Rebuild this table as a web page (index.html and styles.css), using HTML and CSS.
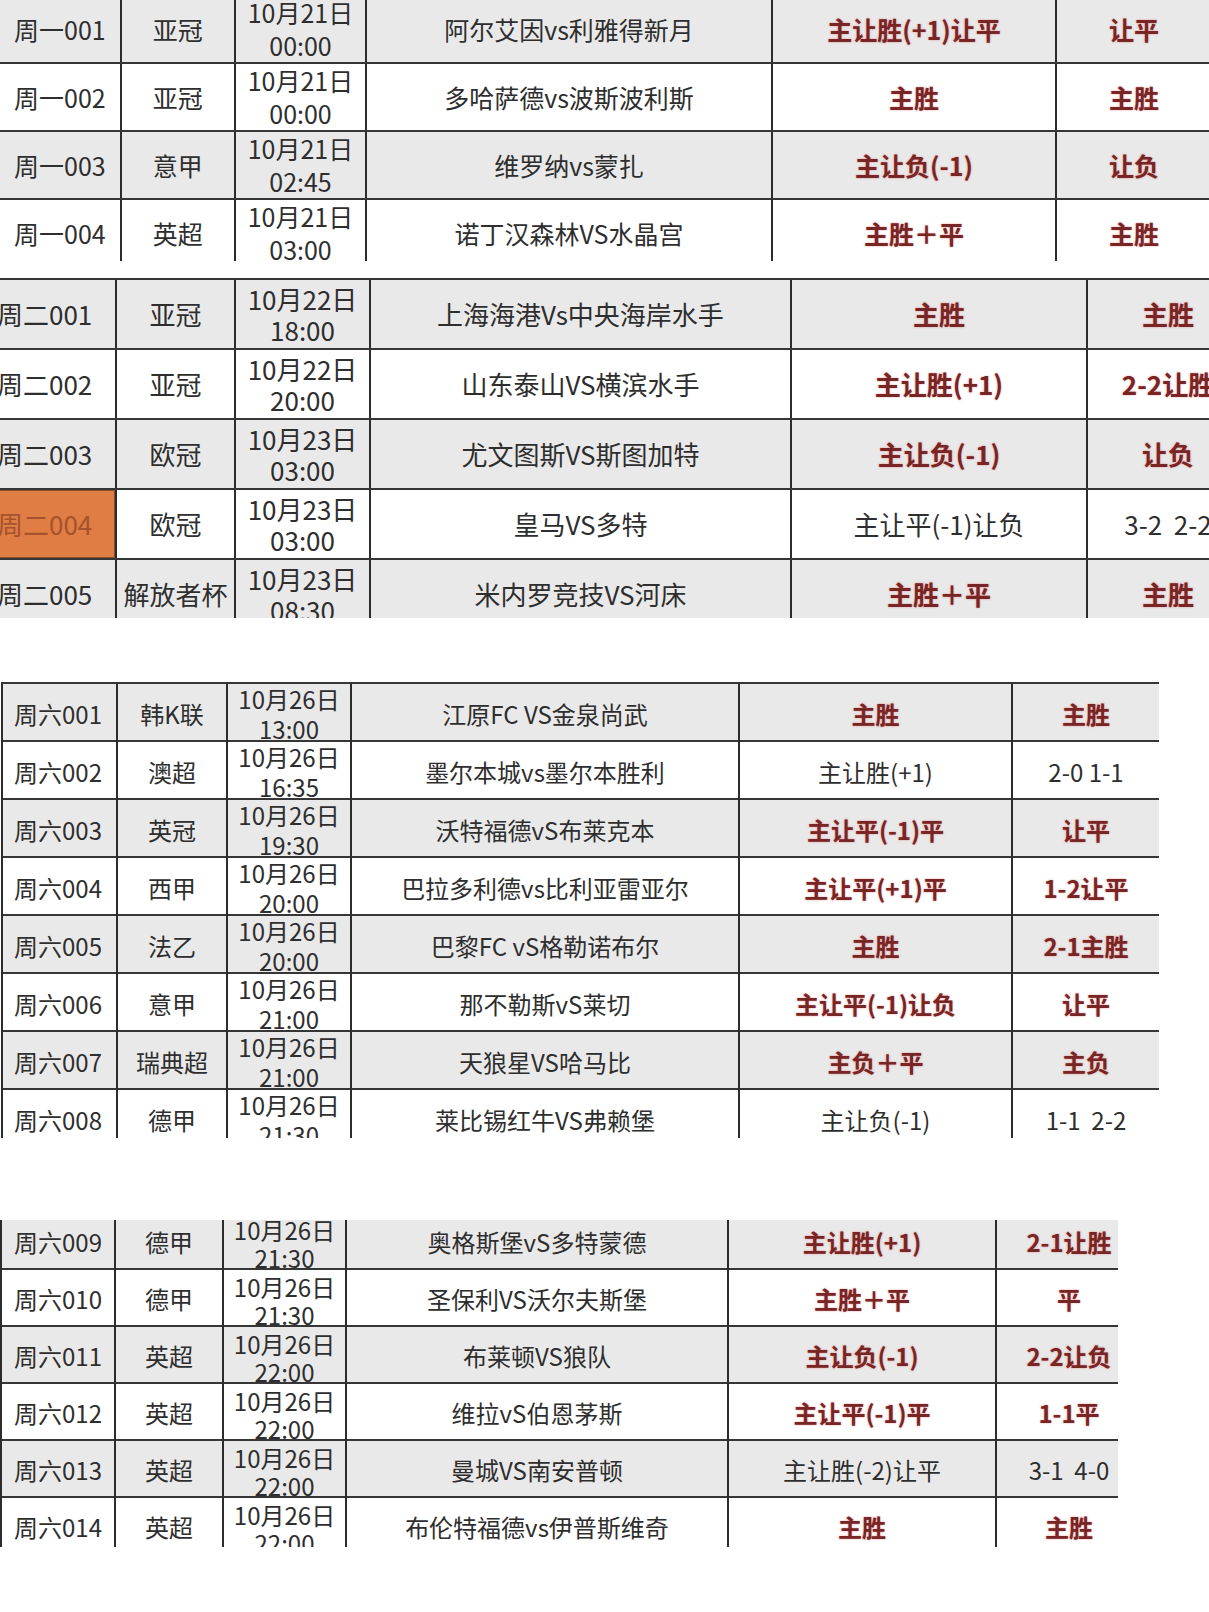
FILE: index.html
```html
<!DOCTYPE html>
<html lang="zh-CN">
<head>
<meta charset="utf-8">
<title>赛事推荐</title>
<link rel="stylesheet" href="styles.css">
</head>
<body>
<main class="page">

  <section class="sheet sheet-mon">
    <div class="rows">
      <div class="row shade">
        <div class="c id">周一001</div><div class="c lg">亚冠</div>
        <div class="c dt"><span>10月21日</span><span>00:00</span></div>
        <div class="c mt">阿尔艾因vs利雅得新月</div>
        <div class="c rs hot">主让胜(+1)让平</div><div class="c rs hot">让平</div>
      </div>
      <div class="row">
        <div class="c id">周一002</div><div class="c lg">亚冠</div>
        <div class="c dt"><span>10月21日</span><span>00:00</span></div>
        <div class="c mt">多哈萨德vs波斯波利斯</div>
        <div class="c rs hot">主胜</div><div class="c rs hot">主胜</div>
      </div>
      <div class="row shade">
        <div class="c id">周一003</div><div class="c lg">意甲</div>
        <div class="c dt"><span>10月21日</span><span>02:45</span></div>
        <div class="c mt">维罗纳vs蒙扎</div>
        <div class="c rs hot">主让负(-1)</div><div class="c rs hot">让负</div>
      </div>
      <div class="row">
        <div class="c id">周一004</div><div class="c lg">英超</div>
        <div class="c dt"><span>10月21日</span><span>03:00</span></div>
        <div class="c mt">诺丁汉森林VS水晶宫</div>
        <div class="c rs hot">主胜＋平</div><div class="c rs hot">主胜</div>
      </div>
    </div>
  </section>

  <section class="sheet sheet-tue">
    <div class="rows">
      <div class="row shade">
        <div class="c id">周二001</div><div class="c lg">亚冠</div>
        <div class="c dt"><span>10月22日</span><span>18:00</span></div>
        <div class="c mt">上海海港Vs中央海岸水手</div>
        <div class="c rs hot">主胜</div><div class="c rs hot">主胜</div>
      </div>
      <div class="row">
        <div class="c id">周二002</div><div class="c lg">亚冠</div>
        <div class="c dt"><span>10月22日</span><span>20:00</span></div>
        <div class="c mt">山东泰山VS横滨水手</div>
        <div class="c rs hot">主让胜(+1)</div><div class="c rs hot">2-2让胜</div>
      </div>
      <div class="row shade">
        <div class="c id">周二003</div><div class="c lg">欧冠</div>
        <div class="c dt"><span>10月23日</span><span>03:00</span></div>
        <div class="c mt">尤文图斯VS斯图加特</div>
        <div class="c rs hot">主让负(-1)</div><div class="c rs hot">让负</div>
      </div>
      <div class="row">
        <div class="c id flag">周二004</div><div class="c lg">欧冠</div>
        <div class="c dt"><span>10月23日</span><span>03:00</span></div>
        <div class="c mt">皇马VS多特</div>
        <div class="c rs">主让平(-1)让负</div><div class="c rs">3-2  2-2</div>
      </div>
      <div class="row shade">
        <div class="c id">周二005</div><div class="c lg">解放者杯</div>
        <div class="c dt"><span>10月23日</span><span>08:30</span></div>
        <div class="c mt">米内罗竞技VS河床</div>
        <div class="c rs hot">主胜＋平</div><div class="c rs hot">主胜</div>
      </div>
    </div>
  </section>

  <section class="sheet sheet-sat1">
    <div class="rows">
      <div class="row shade">
        <div class="c id">周六001</div><div class="c lg">韩K联</div>
        <div class="c dt"><span>10月26日</span><span>13:00</span></div>
        <div class="c mt">江原FC VS金泉尚武</div>
        <div class="c rs hot">主胜</div><div class="c rs hot">主胜</div>
      </div>
      <div class="row">
        <div class="c id">周六002</div><div class="c lg">澳超</div>
        <div class="c dt"><span>10月26日</span><span>16:35</span></div>
        <div class="c mt">墨尔本城vs墨尔本胜利</div>
        <div class="c rs">主让胜(+1)</div><div class="c rs">2-0 1-1</div>
      </div>
      <div class="row shade">
        <div class="c id">周六003</div><div class="c lg">英冠</div>
        <div class="c dt"><span>10月26日</span><span>19:30</span></div>
        <div class="c mt">沃特福德vS布莱克本</div>
        <div class="c rs hot">主让平(-1)平</div><div class="c rs hot">让平</div>
      </div>
      <div class="row">
        <div class="c id">周六004</div><div class="c lg">西甲</div>
        <div class="c dt"><span>10月26日</span><span>20:00</span></div>
        <div class="c mt">巴拉多利德vs比利亚雷亚尔</div>
        <div class="c rs hot">主让平(+1)平</div><div class="c rs hot">1-2让平</div>
      </div>
      <div class="row shade">
        <div class="c id">周六005</div><div class="c lg">法乙</div>
        <div class="c dt"><span>10月26日</span><span>20:00</span></div>
        <div class="c mt">巴黎FC vS格勒诺布尔</div>
        <div class="c rs hot">主胜</div><div class="c rs hot">2-1主胜</div>
      </div>
      <div class="row">
        <div class="c id">周六006</div><div class="c lg">意甲</div>
        <div class="c dt"><span>10月26日</span><span>21:00</span></div>
        <div class="c mt">那不勒斯vS莱切</div>
        <div class="c rs hot">主让平(-1)让负</div><div class="c rs hot">让平</div>
      </div>
      <div class="row shade">
        <div class="c id">周六007</div><div class="c lg">瑞典超</div>
        <div class="c dt"><span>10月26日</span><span>21:00</span></div>
        <div class="c mt">天狼星VS哈马比</div>
        <div class="c rs hot">主负＋平</div><div class="c rs hot">主负</div>
      </div>
      <div class="row">
        <div class="c id">周六008</div><div class="c lg">德甲</div>
        <div class="c dt"><span>10月26日</span><span>21:30</span></div>
        <div class="c mt">莱比锡红牛VS弗赖堡</div>
        <div class="c rs">主让负(-1)</div><div class="c rs">1-1  2-2</div>
      </div>
    </div>
  </section>

  <section class="sheet sheet-sat2">
    <div class="rows">
      <div class="row shade">
        <div class="c id">周六009</div><div class="c lg">德甲</div>
        <div class="c dt"><span>10月26日</span><span>21:30</span></div>
        <div class="c mt">奥格斯堡vS多特蒙德</div>
        <div class="c rs hot">主让胜(+1)</div><div class="c rs hot">2-1让胜</div>
      </div>
      <div class="row">
        <div class="c id">周六010</div><div class="c lg">德甲</div>
        <div class="c dt"><span>10月26日</span><span>21:30</span></div>
        <div class="c mt">圣保利VS沃尔夫斯堡</div>
        <div class="c rs hot">主胜＋平</div><div class="c rs hot">平</div>
      </div>
      <div class="row shade">
        <div class="c id">周六011</div><div class="c lg">英超</div>
        <div class="c dt"><span>10月26日</span><span>22:00</span></div>
        <div class="c mt">布莱顿VS狼队</div>
        <div class="c rs hot">主让负(-1)</div><div class="c rs hot">2-2让负</div>
      </div>
      <div class="row">
        <div class="c id">周六012</div><div class="c lg">英超</div>
        <div class="c dt"><span>10月26日</span><span>22:00</span></div>
        <div class="c mt">维拉vS伯恩茅斯</div>
        <div class="c rs hot">主让平(-1)平</div><div class="c rs hot">1-1平</div>
      </div>
      <div class="row shade">
        <div class="c id">周六013</div><div class="c lg">英超</div>
        <div class="c dt"><span>10月26日</span><span>22:00</span></div>
        <div class="c mt">曼城VS南安普顿</div>
        <div class="c rs">主让胜(-2)让平</div><div class="c rs">3-1  4-0</div>
      </div>
      <div class="row">
        <div class="c id">周六014</div><div class="c lg">英超</div>
        <div class="c dt"><span>10月26日</span><span>22:00</span></div>
        <div class="c mt">布伦特福德vs伊普斯维奇</div>
        <div class="c rs hot">主胜</div><div class="c rs hot">主胜</div>
      </div>
    </div>
  </section>

</main>
</body>
</html>
```

FILE: styles.css
```css
html, body {
  margin: 0;
  padding: 0;
  background: #ffffff;
  overflow: hidden;
}

.page {
  width: 1209px;
  height: 1612px;
  font-family: "Noto Sans CJK SC", "Noto Sans", sans-serif;
  color: #2e2e2e;
}

.sheet {
  overflow: hidden;
  position: relative;
}

.rows {
  width: max-content;
}

.row {
  display: grid;
  grid-template-columns: var(--cols);
  height: var(--rh);
  box-sizing: border-box;
  border-top: 2px solid #363636;
  background: #ffffff;
}

.row.shade {
  background: #e9e9e9;
}

.c {
  box-sizing: border-box;
  display: flex;
  align-items: center;
  justify-content: center;
  border-left: 2px solid #2c2c2c;
  white-space: pre;
  font-size: var(--fs);
  line-height: 1.2;
  min-width: 0;
}

.c.id {
  justify-content: flex-start;
  padding-left: var(--idpad);
  border-left: var(--firstborder);
}

.c.dt {
  flex-direction: column;
  line-height: var(--dl);
  padding-top: var(--dtshift);
}

.c.dt span {
  display: block;
}

.c.rs.hot {
  font-weight: 700;
  color: #772525;
  text-shadow: 0 0 2px rgba(220, 35, 35, 0.5);
}

.c.flag {
  background: #df7d45;
  color: #a6522c;
  box-shadow: inset 0 0 0 1px #8a4a2c;
}

/* 周一 */
.sheet-mon {
  height: 261px;
  --rh: 68px;
  --fs: 25px;
  --dl: 33px;
  --dtshift: 0px;
  --idpad: 14px;
  --firstborder: none;
  --cols: 119.5px 114.5px 131px 406px 284px 156px;
}
.sheet-mon .rows {
  margin-top: -6px;
}

/* 周二 */
.sheet-tue {
  margin-top: 17px;
  height: 340px;
  --rh: 70px;
  --fs: 26px;
  --dl: 31px;
  --dtshift: 0px;
  --idpad: 9px;
  --firstborder: none;
  --cols: 127px 119px 135px 421px 296px 162px;
}
.sheet-tue .rows {
  margin-left: -12px;
}

/* 周六 上 */
.sheet-sat1 {
  margin-top: 64px;
  height: 456px;
  --rh: 58px;
  --fs: 24px;
  --dl: 30px;
  --dtshift: 0px;
  --idpad: 11px;
  --firstborder: 2px solid #2c2c2c;
  --cols: 115px 110px 124px 388px 273px 148px;
}
.sheet-sat1 .rows {
  margin-left: 1px;
}

/* 周六 下 */
.sheet-sat2 {
  margin-top: 82px;
  width: 1118px;
  height: 327px;
  --rh: 57px;
  --fs: 24px;
  --dl: 28px;
  --dtshift: 3px;
  --idpad: 12px;
  --firstborder: 2px solid #2c2c2c;
  --cols: 114px 108px 123px 382px 268px 146px;
}
.sheet-sat2 .rows {
  margin-top: -9px;
}
```
